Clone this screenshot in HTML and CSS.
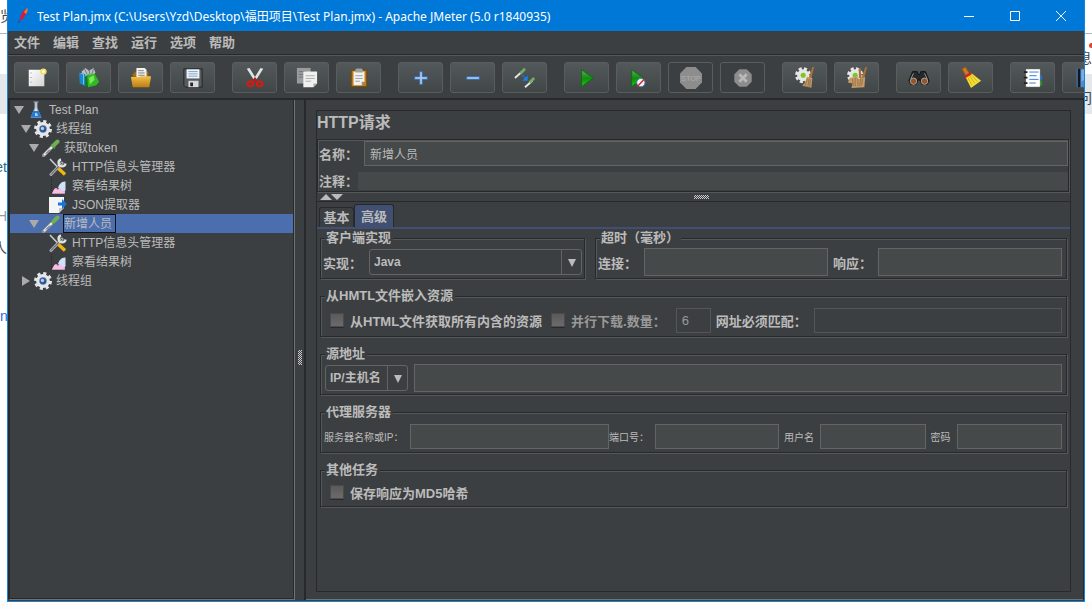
FILE: index.html
```html
<!DOCTYPE html>
<html lang="zh-CN">
<head>
    <meta charset="UTF-8">
    <meta name="viewport" content="width=device-width, initial-scale=1">
    <title>Apache JMeter</title>
    <link rel="stylesheet" href="styles.css">
</head>
<body>
<svg class="defs" aria-hidden="true">
    <defs>
        <linearGradient id="play" x1="0" y1="0" x2="0" y2="1">
            <stop offset="0" stop-color="#5fae5b"/>
            <stop offset=".5" stop-color="#118d10"/>
            <stop offset="1" stop-color="#18c80d"/>
        </linearGradient>
        <linearGradient id="paper" x1="0" y1="0" x2="1" y2="1">
            <stop offset="0" stop-color="#fff"/>
            <stop offset="1" stop-color="#d4d4d4"/>
        </linearGradient>
        <linearGradient id="gold" x1="0" y1="0" x2="0" y2="1">
            <stop offset="0" stop-color="#f2c04d"/>
            <stop offset="1" stop-color="#bd7d10"/>
        </linearGradient>
        <symbol id="i-flask" viewBox="0 0 18 18">
            <path d="M6.500 1h5M8 1v6L4 16.500h10L10 7V1" fill="#d8e2ee" stroke="#9aa5b2"/>
            <path d="M6.300 10h5.400l2.800 6.500h-11z" fill="#2478d2"/>
            <path d="M8 12h2l1 3H8z" fill="#9fd0fa"/>
        </symbol>
        <symbol id="i-gear" viewBox="0 0 18 18">
            <circle cx="9" cy="9" r="7.500" fill="none" stroke="#e4e6ea" stroke-width="3" stroke-dasharray="3.100 2.790"/>
            <circle cx="9" cy="9" r="5.300" fill="#4b6fa5" stroke="#e4e6ea" stroke-width="3.200"/>
            <circle cx="9" cy="9" r="2.800" fill="#26518f"/>
            <circle cx="8.500" cy="8.500" r="1.700" fill="#b9cdea"/>
        </symbol>
        <symbol id="i-dropper" viewBox="0 0 18 18">
            <path d="M1.500 16.500L11 7" stroke="#8f9396" stroke-width="3.200" stroke-linecap="round"/>
            <path d="M2 16L11 7" stroke="#e9ecee" stroke-width="2"/>
            <path d="M4 14.500l4-4" stroke="#3d4245"/>
            <path d="M9 5.500l4 4" stroke="#4f7e3c" stroke-width="2"/>
            <path d="M11.500 6.500l4-4" stroke="#6fae52" stroke-width="4" stroke-linecap="round"/>
        </symbol>
        <symbol id="i-tools" viewBox="0 0 18 18">
            <path d="M1 1l8 8.500" stroke="#c9ccd0" stroke-width="1.600"/>
            <path d="M2 16.500L13 5" stroke="#a9acaf" stroke-width="3" stroke-linecap="round"/>
            <path d="M2 16.500L13 5" stroke="#54585a"/>
            <path d="M12 1.500a3.500 3.500 0 1 0 4.500 4" fill="none" stroke="#dfe1e3" stroke-width="2.400"/>
            <path d="M9.500 10.500l6.500 6" stroke="#f2b60e" stroke-width="3.400"/>
        </symbol>
        <symbol id="i-chart" viewBox="0 0 18 18">
            <path d="M2.500 1v16" stroke="#26292b" stroke-dasharray="1 1"/>
            <path d="M3 16.500c2-5 4-7 6-4 2-1 3-5 7-7v11z" fill="#ee9fd3"/>
            <path d="M9 11c1-4 4-7 7.500-6.500v9l-3 1z" fill="#cfe1f8"/>
            <path d="M3 16.500l3-5 3 2 2-3 3 4 2 2z" fill="#f6bfe3"/>
        </symbol>
        <symbol id="i-extract" viewBox="0 0 18 18">
            <path d="M0 1h15v10l-5 6H0z" fill="#f3f4f5"/>
            <path d="M10 17v-5h5z" fill="#c4c6c8"/>
            <path d="M9 6.500h4V3l5 5-5 5V9.500H9z" fill="#1973d8"/>
        </symbol>
        <symbol id="i-cog" viewBox="0 0 24 24">
            <circle cx="10" cy="9" r="6.800" fill="none" stroke="#e8e8e8" stroke-width="4" stroke-dasharray="3.100 2.240"/>
            <circle cx="10" cy="9" r="6.500" fill="#e6e6e6"/>
            <circle cx="10" cy="9" r="2.800" fill="#7cc726"/>
        </symbol>
        <symbol id="i-brush" viewBox="0 0 24 24">
            <path d="M20 0h2L19 12h-3z" fill="#a9713a"/>
            <path d="M14 10.500l6 1.500-1 10.500-10-2c3-3 4-6 5-10z" fill="#c39a68"/>
            <path d="M14.500 13l-2.500 8M16.500 13l-1.500 9M18 13.500L17 22" stroke="#87602f" stroke-width=".7" fill="none"/>
        </symbol>
    </defs>
</svg>

<div class="desktop">
    <div class="behind behind-left" aria-hidden="true">
        <span>览</span>
        <span class="et">et</span>
        <span class="h">H</span>
        <span class="ren">人</span>
        <span class="ng">ng</span>
    </div>

    <div class="window">
        <header class="titlebar">
            <svg class="feather" viewBox="0 0 16 18">
                <path d="M3.500 16L7 9" stroke="#6e1d48" stroke-dasharray="2 1"/>
                <path d="M5 14c-1-4 2-9 5-12l2 1c0 4-3 9-7 11z" fill="#c82047"/>
                <path d="M9 5c1-2 2-3 3.500-4 .5 2 0 4-1.500 6z" fill="#ef7d27"/>
            </svg>
            <span class="caption">Test Plan.jmx (C:\Users\Yzd\Desktop\福田项目\Test Plan.jmx) - Apache JMeter (5.0 r1840935)</span>
            <button class="winbtn" aria-label="最小化"><svg viewBox="0 0 12 12"><path d="M1 6.500h10"/></svg></button>
            <button class="winbtn" aria-label="最大化"><svg viewBox="0 0 12 12"><path d="M1.500 1.500h9v9h-9z"/></svg></button>
            <button class="winbtn" aria-label="关闭"><svg viewBox="0 0 12 12"><path d="M1 1l10 10M11 1L1 11"/></svg></button>
        </header>

        <nav class="menubar">
            <button>文件</button>
            <button>编辑</button>
            <button>查找</button>
            <button>运行</button>
            <button>选项</button>
            <button>帮助</button>
        </nav>

        <div class="toolbar">
            <div class="tools">
                <button aria-label="新建">
                    <svg viewBox="0 0 24 24">
                        <path d="M3 3h17v18H3z" fill="url(#paper)"/>
                        <path d="M5.500 6v1M5.500 11v1M5.500 16v1" stroke="#777"/>
                        <circle cx="19" cy="5" r="3.500" fill="#f0e06a"/>
                        <circle cx="19" cy="5" r="1.500" fill="#fffef0"/>
                    </svg>
                </button>
                <button aria-label="模板">
                    <svg viewBox="0 0 24 24">
                        <path d="M4 5l4-4 4 3 5-3 2 5-3 5H5z" fill="#b9bec1"/>
                        <path d="M7 2l3 6M12 3l1 5M17 2l-2 6" stroke="#6c7275"/>
                        <path d="M1 6l7 2v13l-6-3z" fill="#1b86cc"/>
                        <path d="M3 7l3 1v11" stroke="#78c7f2" fill="none"/>
                        <path d="M8 10l4-2v14l-4-2z" fill="#117d17"/>
                        <path d="M10 9l8-2 5 9-3 4-9 2z" fill="#2dbb21"/>
                        <path d="M12 12l5-3 1 5-5 5z" fill="#7be65a"/>
                    </svg>
                </button>
                <button aria-label="打开">
                    <svg viewBox="0 0 24 24">
                        <path d="M3 8l3-3h14v9H3z" fill="#a96c0d"/>
                        <path d="M7 1h9l2 2v10H7z" fill="#f2f2f2"/>
                        <path d="M9 4h6M9 6.500h7M9 9h7" stroke="#777"/>
                        <path d="M1 11h9l2-1h11l-2 12H3z" fill="url(#gold)"/>
                    </svg>
                </button>
                <button aria-label="保存">
                    <svg viewBox="0 0 24 24">
                        <path d="M2 2h20v20H4l-2-2z" fill="#555b5e" stroke="#222"/>
                        <path d="M5 2.500h14v10H5z" fill="#eef4fa"/>
                        <path d="M7 5h10M7 7.500h10M7 10h10" stroke="#7b9cc4"/>
                        <path d="M7 15h11v7H7z" fill="#d8d8d8"/>
                        <path d="M9 17h3v4H9z" fill="#222"/>
                    </svg>
                </button>
            </div>
            <div class="tools">
                <button aria-label="剪切">
                    <svg viewBox="0 0 24 24">
                        <path d="M3 2l3-1 8 13-2 2zM21 2l-3-1-8 13 2 2z" fill="#e3e3e3"/>
                        <path d="M9 14l3-2 3 2-3 3z" fill="#c4170f"/>
                        <ellipse cx="7" cy="18.500" rx="3" ry="2.500" fill="none" stroke="#d41c14" stroke-width="2.400"/>
                        <ellipse cx="17" cy="18.500" rx="3" ry="2.500" fill="none" stroke="#d41c14" stroke-width="2.400"/>
                    </svg>
                </button>
                <button aria-label="复制">
                    <svg viewBox="0 0 24 24">
                        <path d="M1 1h15v17H1z" fill="#999c9d"/>
                        <path d="M3 5h8M3 8h8M3 11h8" stroke="#707374"/>
                        <path d="M8 5h15v13l-4 4H8z" fill="#f0f0ef"/>
                        <path d="M10.500 9.500h10M10.500 12.500h10M10.500 15.500h6" stroke="#aaa"/>
                        <path d="M19 22v-4h4z" fill="#aaa"/>
                    </svg>
                </button>
                <button aria-label="粘贴">
                    <svg viewBox="0 0 24 24">
                        <path d="M3.500 3.500h17v18h-17z" fill="#bb7a1c" stroke="#704405"/>
                        <path d="M6 5h12v11l-3 4H6z" fill="#f1f1f0"/>
                        <path d="M8 2.500l2-1h4l2 1V6H8z" fill="#a0a39c"/>
                        <path d="M8 9.500h8M8 12.500h8M8 15.500h5" stroke="#999"/>
                        <path d="M15 20v-4h3z" fill="#888"/>
                    </svg>
                </button>
            </div>
            <div class="tools">
                <button aria-label="展开全部">
                    <svg viewBox="0 0 24 24"><path d="M10.500 5h3v5.500H19v3h-5.500V19h-3v-5.500H5v-3h5.500z" fill="#a9c8ee" stroke="#3269ad"/></svg>
                </button>
                <button aria-label="收起全部">
                    <svg viewBox="0 0 24 24"><path d="M5 10.500h14v3H5z" fill="#a9c8ee" stroke="#3269ad"/></svg>
                </button>
                <button aria-label="切换">
                    <svg viewBox="0 0 24 24">
                        <path d="M1 12l8-7M12 22l8-7" stroke="#e1e4e3" stroke-width="2.200"/>
                        <path d="M7 7l5-5M17 17l5-5" stroke="#73ad5d" stroke-width="3"/>
                        <path d="M9 9l4 4" stroke="#1980ed" stroke-width="1.500" stroke-dasharray="2 1"/>
                        <path d="M15 9v6h-6z" fill="#1980ed"/>
                    </svg>
                </button>
            </div>
            <div class="tools">
                <button aria-label="启动">
                    <svg viewBox="0 0 24 24"><path d="M6 3l13 9-13 9.500z" fill="url(#play)" stroke="#0b6c0b"/></svg>
                </button>
                <button aria-label="不停顿开始">
                    <svg viewBox="0 0 24 24">
                        <path d="M4 3l13 9-13 9.500z" fill="url(#play)" stroke="#0b6c0b"/>
                        <circle cx="14" cy="17" r="4.500" fill="#eef3fa" stroke="#4a78b8"/>
                        <path d="M10.500 21l7.500-8" stroke="#d22" stroke-width="1.500"/>
                    </svg>
                </button>
                <button aria-label="停止" disabled>
                    <svg viewBox="0 0 24 24">
                        <path d="M7 0h10l7 7v10l-7 7H7l-7-7V7z" fill="#8d8d8d"/>
                        <text class="stop" x="12" y="15" text-anchor="middle">STOP</text>
                    </svg>
                </button>
                <button aria-label="关闭" disabled>
                    <svg viewBox="0 0 24 24">
                        <path d="M8 2.500h8L21.500 8v8L16 21.500H8L2.500 16V8z" fill="#8d8d8d"/>
                        <path d="M8 8l8 8M16 8l-8 8" stroke="#b9b9b9" stroke-width="3"/>
                    </svg>
                </button>
            </div>
            <div class="tools">
                <button aria-label="清除">
                    <svg viewBox="0 0 24 24"><use href="#i-cog"/><use href="#i-brush"/></svg>
                </button>
                <button aria-label="清除全部">
                    <svg viewBox="0 0 24 24">
                        <use href="#i-cog"/>
                        <path d="M14 1h2l1 11h-3zM21 0h2l-3 12h-3z" fill="#a9713a"/>
                        <path d="M4 12l8-2 2 3 7-2-1 11-14 1 1-5-5-1z" fill="#c39a68"/>
                        <path d="M7 13l1 8M10 12v9M13 13v8M16 13l-1 8M18 13l-1 7" stroke="#87602f" stroke-width=".7"/>
                    </svg>
                </button>
            </div>
            <div class="tools">
                <button aria-label="查找">
                    <svg viewBox="0 0 24 24">
                        <path d="M5 5h5l1 3h2l1-3h5l4 10-2 4h-6l-2-5h-2l-2 5H3l-2-4z" fill="#26292a" stroke="#111"/>
                        <path d="M6 7l-3 6M18 7l3 6" stroke="#9a9fa1"/>
                        <circle cx="6" cy="15.500" r="3.500" fill="#985427" stroke="#aaa"/>
                        <circle cx="18" cy="15.500" r="3.500" fill="#985427" stroke="#aaa"/>
                    </svg>
                </button>
                <button aria-label="重置查找">
                    <svg viewBox="0 0 24 24">
                        <path d="M2 2l4-2 5 8-4 3z" fill="#c87a25" stroke="#915312"/>
                        <path d="M6 11l7-4 10 8-11 8z" fill="#f4dc34"/>
                        <path d="M9 12l4 8M11 10l5 8M13 9l6 7" stroke="#bf9c0b" stroke-width=".7" fill="none"/>
                        <path d="M5 11l7-4" stroke="#d5271b" stroke-width="3"/>
                    </svg>
                </button>
            </div>
            <div class="tools">
                <button aria-label="函数助手">
                    <svg viewBox="0 0 24 24">
                        <path d="M18 9h4v5h-4z" fill="#1474e0"/>
                        <path d="M18 15h4v5h-4z" fill="#1aa31a"/>
                        <path d="M4 2h16v20H4z" fill="#fff" stroke="#222" stroke-width=".5"/>
                        <path d="M8 5.500h10M8 9.500h8M8 13.500h10M8 17.500h7" stroke="#2a6fde"/>
                        <path d="M2 5.500h4M2 11.500h4M2 17.500h4" stroke="#222" stroke-width="2"/>
                    </svg>
                </button>
                <button aria-label="帮助">
                    <svg viewBox="0 0 24 24">
                        <path d="M3 2h18v20H3z" fill="#4c8ad5"/>
                        <path d="M4 2h3v20H4z" fill="#14181c"/>
                        <path d="M8 3h12v6L8 16z" fill="#79aee9"/>
                    </svg>
                </button>
            </div>
        </div>

        <div class="content">
            <aside class="sidebar">
                <ul class="tree">
                    <li class="lv0"><i class="twist"></i><svg><use href="#i-flask"/></svg><span>Test Plan</span></li>
                    <li class="lv1"><i class="twist"></i><svg><use href="#i-gear"/></svg><span>线程组</span></li>
                    <li class="lv2"><i class="twist"></i><svg><use href="#i-dropper"/></svg><span>获取token</span></li>
                    <li class="lv3"><svg><use href="#i-tools"/></svg><span>HTTP信息头管理器</span></li>
                    <li class="lv3"><svg><use href="#i-chart"/></svg><span>察看结果树</span></li>
                    <li class="lv3"><svg><use href="#i-extract"/></svg><span>JSON提取器</span></li>
                    <li class="lv2 selected"><i class="twist"></i><svg><use href="#i-dropper"/></svg><span>新增人员</span></li>
                    <li class="lv3"><svg><use href="#i-tools"/></svg><span>HTTP信息头管理器</span></li>
                    <li class="lv3"><svg><use href="#i-chart"/></svg><span>察看结果树</span></li>
                    <li class="lv1"><i class="twist closed"></i><svg><use href="#i-gear"/></svg><span>线程组</span></li>
                </ul>
            </aside>

            <div class="splitter"><i class="grip grip-v"></i></div>

            <main class="main">
                <div class="editor">
                    <h1>HTTP请求</h1>
                    <div class="naming etched">
                        <div class="line">
                            <label for="name">名称：</label>
                            <input class="field" id="name" type="text" value="新增人员">
                        </div>
                        <div class="line comment">
                            <label for="comment">注释：</label>
                            <input class="flat" id="comment" type="text">
                        </div>
                    </div>

                    <div class="hsplit">
                        <svg class="arrows" viewBox="0 0 24 6"><path d="M0 6l6-6 6 6zM11 0h12l-6 6z" fill="#bbb"/></svg>
                        <i class="grip grip-h"></i>
                    </div>

                    <div class="tabs">
                        <button class="tab">基本</button>
                        <button class="tab active">高级</button>
                    </div>

                    <div class="panel">
                        <div class="pair">
                            <fieldset class="etched impl">
                                <legend>客户端实现</legend>
                                <div class="row">
                                    <label for="impl">实现：</label>
                                    <span class="combo combo-wide">
                                        <select id="impl"><option>Java</option></select>
                                    </span>
                                </div>
                            </fieldset>
                            <fieldset class="etched timeout">
                                <legend>超时（毫秒）</legend>
                                <div class="row">
                                    <label for="connect">连接：</label>
                                    <input class="field tall" id="connect" type="text">
                                    <label for="response">响应：</label>
                                    <input class="field tall" id="response" type="text">
                                </div>
                            </fieldset>
                        </div>

                        <fieldset class="etched">
                            <legend>从HMTL文件嵌入资源</legend>
                            <div class="row embed">
                                <input type="checkbox" id="embed">
                                <label for="embed">从HTML文件获取所有内含的资源</label>
                                <input type="checkbox" id="parallel" disabled>
                                <label class="dim" for="parallel">并行下载.</label><label class="dim count" for="pool">数量：</label>
                                <input class="field pool" id="pool" type="text" value="6" disabled>
                                <label for="match">网址必须匹配：</label>
                                <input class="field" id="match" type="text" disabled>
                            </div>
                        </fieldset>

                        <fieldset class="etched">
                            <legend>源地址</legend>
                            <div class="row source">
                                <span class="combo">
                                    <select aria-label="源地址类型"><option>IP/主机名</option></select>
                                </span>
                                <input class="field tall" type="text" aria-label="源地址">
                            </div>
                        </fieldset>

                        <fieldset class="etched">
                            <legend>代理服务器</legend>
                            <div class="row proxy">
                                <label for="phost">服务器名称或IP：</label>
                                <input class="field phost" id="phost" type="text">
                                <label for="pport">端口号：</label>
                                <input class="field pport" id="pport" type="text">
                                <label class="user" for="puser">用户名</label>
                                <input class="field" id="puser" type="text">
                                <label class="pass" for="ppass">密码</label>
                                <input class="field" id="ppass" type="password">
                            </div>
                        </fieldset>

                        <fieldset class="etched">
                            <legend>其他任务</legend>
                            <div class="row short">
                                <input type="checkbox" id="md5">
                                <label for="md5">保存响应为MD5哈希</label>
                            </div>
                        </fieldset>
                    </div>
                </div>
            </main>
        </div>
    </div>

    <div class="behind behind-right" aria-hidden="true">
        <i class="dot"></i>
        <span class="xi">息</span>
        <span class="wen">问</span>
    </div>
</div>
</body>
</html>
```
FILE: styles.css
```css
* {
    box-sizing: border-box;
}

body {
    margin: 0;
    background: #fdfdfe;
    color: #bbb;
    font: 12px "Liberation Sans", "Noto Sans CJK SC", sans-serif;
}

button, input, select {
    margin: 0;
    padding: 0;
    color: inherit;
    font: inherit;
}

.defs {
    position: absolute;
    width: 0;
    height: 0;
}

.desktop {
    display: grid;
    grid-template-columns: 7px minmax(0, 1fr) 7px;
    height: 100vh;
    min-height: 560px;
    padding-bottom: 7px;
}

/* page that shows behind the window */
.behind {
    overflow: hidden;
    background: linear-gradient(#fff 33px, #b5b5b5 33px, #b5b5b5 34px, #fff 34px, #fff 74px, #e4e8eb 74px, #e4e8eb 114px, #fff 114px);
    color: #444;
    font-size: 14px;
    line-height: 20px;
    white-space: nowrap;
}

.behind span {
    display: flex;
    padding-top: 6px;
}

.behind .et {
    justify-content: flex-end;
    padding-top: 131px;
    color: #2a6a80;
}

.behind .h {
    justify-content: flex-end;
    padding-top: 29px;
    color: #999;
}

.behind .ren {
    justify-content: flex-end;
    padding-top: 12px;
}

.behind .ng {
    padding-top: 48px;
    color: #3367d6;
}

.behind-right {
    display: flex;
    flex-direction: column;
}

.behind-right span {
    justify-content: flex-end;
}

.dot {
    width: 5px;
    height: 5px;
    margin: 43px 0 0 4px;
    background: #e8402a;
    border-radius: 50%;
}

.behind .xi {
    padding-top: 0;
}

.behind .wen {
    padding-top: 20px;
    color: #345;
}

.window {
    display: flex;
    flex-direction: column;
    min-width: 0;
    overflow: hidden;
    background: #3c3f41;
    border: 1px solid #1883d7;
    border-top: 0;
}

.titlebar {
    display: flex;
    align-items: center;
    height: 31px;
    flex: none;
    padding-left: 7px;
    background: #0078d7;
    color: #fff;
    font: 12px "Noto Sans", "Noto Sans CJK SC", sans-serif;
}

.feather {
    width: 16px;
    height: 18px;
    margin-right: 6px;
}

.caption {
    flex: 1;
    white-space: nowrap;
    overflow: hidden;
}

.winbtn {
    width: 46px;
    height: 30px;
    background: none;
    border: 0;
}

.winbtn svg {
    display: block;
    width: 12px;
    height: 12px;
    margin: auto;
    fill: none;
    stroke: #fff;
}

.menubar {
    display: flex;
    flex: none;
    gap: 13px;
    height: 24px;
    padding: 0 0 2px 6px;
    border-bottom: 1px solid #27292b;
}

.menubar button {
    background: none;
    border: 0;
    font-size: 13px;
    font-weight: bold;
}

.toolbar {
    display: flex;
    flex: none;
    gap: 17px;
    height: 45px;
    padding: 6px;
    border-top: 1px solid #555859;
    border-bottom: 2px solid #27292b;
}

.tools {
    display: flex;
    flex: none;
    gap: 7px;
}

.tools button {
    width: 45px;
    height: 31px;
    background: linear-gradient(#53585a, #414647);
    border: 1px solid #5a5d5e;
    border-radius: 3px;
}

.tools button:disabled {
    background: none;
}

.tools svg {
    display: block;
    width: 22px;
    height: 22px;
    margin: auto;
    fill: none;
}

.stop {
    fill: #b0b0b0;
    font-size: 8px;
}

.content {
    display: flex;
    flex: 1;
    min-height: 0;
}

.sidebar {
    width: 287px;
    flex: none;
    margin-bottom: 1px;
    border-left: 2px solid #27292b;
    border-right: 1px solid #707374;
    border-bottom: 1px solid #707374;
    box-shadow: inset -1px -1px #27292b;
}

.tree {
    margin: 0;
    padding: 0 1px 0 0;
    list-style: none;
}

.tree li {
    display: flex;
    align-items: center;
    height: 19px;
}

.tree .lv0 { padding-left: 4px; }
.tree .lv1 { padding-left: 11px; }
.tree .lv2 { padding-left: 19px; }
.tree .lv3 { padding-left: 39px; }

.tree svg {
    width: 18px;
    height: 18px;
    margin: 0 3px;
    fill: none;
}

.tree .lv3 svg {
    margin-left: 0;
    margin-right: 4px;
}

.tree span {
    height: 19px;
    padding: 0 1px;
    line-height: 20px;
}

.tree .selected {
    background: #4b6eaf;
}

.tree .selected span {
    border: 1px solid #111;
    padding: 0 3px 0 0;
    line-height: 18px;
}

.twist {
    border: 5px solid transparent;
    border-top: 8px solid #aaa;
    border-bottom: 0;
}

.twist.closed {
    border: 5px solid transparent;
    border-left: 8px solid #aaa;
    border-right: 0;
    margin-left: 1px;
    margin-right: 1px;
}

.splitter {
    display: flex;
    align-items: center;
    justify-content: center;
    width: 9px;
    flex: none;
    padding-top: 14px;
}

.grip {
    background: conic-gradient(#ccc 25%, transparent 0 50%, #ccc 0 75%, transparent 0) 0 0 / 2px 2px;
}

.grip-v {
    width: 4px;
    height: 15px;
}

.grip-h {
    width: 15px;
    height: 4px;
}

.main {
    display: flex;
    flex: 1;
    min-width: 0;
    margin: 0 0 1px;
    padding: 10px 12px 8px 10px;
    border: solid #27292b;
    border-width: 0 1px 0 2px;
    box-shadow: inset 0 -1px #707374;
}

.editor {
    flex: 1;
    min-width: 0;
    border: 1px solid #27292b;
}

.editor h1 {
    height: 28px;
    margin: 0;
    font-size: 16px;
    line-height: 23px;
}

/* dark line with a light one just inside and outside */
.etched {
    border: 1px solid #27292b;
    box-shadow: inset 1px 1px #555859, 1px 1px #555859;
}

.naming {
    margin-right: 1px;
    padding: 1px 0 1px 1px;
}

.line {
    display: flex;
    align-items: center;
}

.line label {
    width: 45px;
    font-size: 13px;
    font-weight: bold;
}

.line.comment {
    margin-top: 5px;
}

.line.comment label {
    width: 39px;
}

.field {
    flex: 1;
    min-width: 0;
    height: 25px;
    padding: 0 5px;
    background: #45494a;
    border: 1px solid #646464;
    border-radius: 0;
}

.field.tall {
    height: 28px;
}

.field:disabled {
    background: none;
    border-color: #555;
    color: #999;
}

.flat {
    flex: 1;
    min-width: 0;
    height: 18px;
    background: #45494a;
    border: 0;
}

.hsplit {
    display: flex;
    align-items: center;
    height: 10px;
    padding-right: 12px;
    border-bottom: 1px solid #27292b;
}

.arrows {
    width: 24px;
    height: 6px;
    margin-left: 3px;
}

.hsplit .grip {
    margin: 0 auto;
}

.tabs {
    display: flex;
    align-items: flex-end;
    height: 27px;
    padding-left: 2px;
    border-bottom: 2px solid #414f73;
}

.tab {
    width: 35px;
    height: 20px;
    background: none;
    border: 1px solid #27292b;
    border-bottom: 0;
    border-radius: 3px 3px 0 0;
    font-size: 13px;
    font-weight: bold;
    line-height: 19px;
}

.tab.active {
    width: 40px;
    height: 23px;
    background: #414f73;
}

.panel {
    display: flex;
    flex-direction: column;
    gap: 9px;
    padding: 1px 3px 0;
}

.pair {
    display: flex;
    gap: 10px;
}

.impl {
    flex: 0 0 265px;
}

.timeout {
    flex: 1;
}

fieldset {
    min-width: 0;
    margin: 0;
    padding: 0 4px 0 2px;
}

legend {
    height: 16px;
    margin-left: 2px;
    padding: 0 2px 0 1px;
    background: #3c3f41;
    font-size: 13px;
    font-weight: bold;
    line-height: 16px;
}

.row {
    display: flex;
    align-items: center;
    height: 32px;
    font-size: 13px;
    font-weight: bold;
    white-space: nowrap;
}

.row.short {
    height: 28px;
}

.impl .row {
    padding-right: 0;
}

.impl {
    padding-right: 2px;
}

.impl label,
.timeout label {
    width: 46px;
}

.timeout .field + label {
    width: 45px;
    margin-left: 5px;
}

.combo {
    position: relative;
    display: flex;
    width: 83px;
    height: 26px;
}

.combo-wide {
    flex: 1;
}

.combo select {
    width: 100%;
    padding: 0 20px 0 4px;
    appearance: none;
    background: linear-gradient(90deg, #646464 1px, transparent 1px) right top / 20px 100% no-repeat;
    border: 1px solid #646464;
    border-radius: 3px;
    font-size: 12px;
}

.combo::after {
    content: "";
    position: absolute;
    right: 6px;
    top: 10px;
    border: 4px solid transparent;
    border-top: 8px solid #bbb;
    border-bottom: 0;
    pointer-events: none;
}

input[type="checkbox"] {
    width: 14px;
    height: 14px;
    flex: none;
    margin: 0 6px 0 7px;
    appearance: none;
    background: linear-gradient(#5a5a5a, #6b6b6b);
    border: 1px solid #4b4b4b;
    box-shadow: 0 1px #2b2b2b;
}

.embed input[type="checkbox"] + label + input[type="checkbox"] {
    margin-left: 9px;
}

.dim {
    color: #999;
}

.count {
    width: 49px;
}

.embed .pool {
    flex: 0 0 35px;
    margin-right: 5px;
    font-weight: normal;
}

.embed label[for="match"] {
    width: 98px;
}

.source {
    gap: 6px;
    padding-left: 2px;
}

.proxy {
    padding-left: 1px;
    font-size: 10px;
    font-weight: normal;
}

.proxy label {
    width: 86px;
}

.proxy label[for="pport"] {
    width: 46px;
}

.proxy .phost {
    flex-grow: 2;
}

.proxy .pport {
    flex-grow: 1.2;
}

.proxy .user {
    width: 41px;
    padding-left: 5px;
}

.proxy .pass {
    width: 31px;
    padding-left: 5px;
}
```
